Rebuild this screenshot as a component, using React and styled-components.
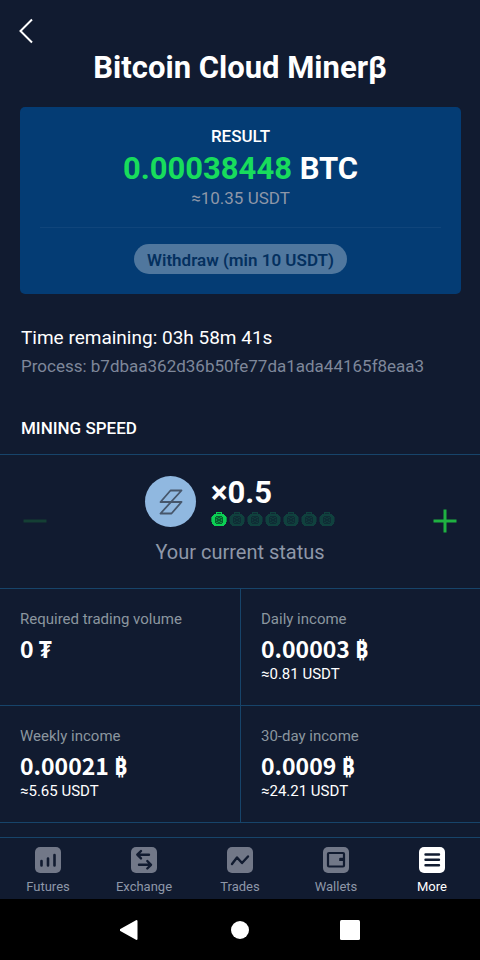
import React from "react";
import styled, { createGlobalStyle } from "styled-components";

const colors = {
  page: "#111b30",
  card: "#043c74",
  line: "#17446a",
  text: "#ffffff",
  muted: "#8e97a8",
  label: "#8b969f",
  green: "#18dc5c",
};

const GlobalStyle = createGlobalStyle`
  *, *::before, *::after { box-sizing: border-box; }
  body {
    margin: 0;
    background: ${colors.page};
    color: ${colors.text};
    font-family: Roboto, "Liberation Sans", sans-serif;
  }
  h1, h2, p, dl, dt, dd { margin: 0; }
  button { font: inherit; border: 0; padding: 0; background: none; color: inherit; cursor: pointer; }
  svg { display: block; flex: none; }
`;

const Screen = styled.div`
  min-height: 100vh;
  display: flex;
  flex-direction: column;
`;

const Content = styled.main`
  flex: 1;
  display: flex;
  flex-direction: column;
`;

const Header = styled.header`
  padding: 16px 16px 0;
`;

const BackButton = styled.button`
  display: block;
  height: 30px;
`;

const Title = styled.h1`
  font-size: 31px;
  line-height: 44px;
  font-weight: 700;
  text-align: center;
`;

const ResultCard = styled.section`
  margin: 17px 19px 0 20px;
  padding: 20px;
  border-radius: 5px;
  background: ${colors.card};
  text-align: center;
`;

const ResultHeading = styled.h2`
  font-size: 17px;
  line-height: 18px;
  font-weight: 500;
`;

const Amount = styled.p`
  && { margin-top: 3px; }
  font-size: 31px;
  line-height: 42px;
  font-weight: 700;

  span { color: ${colors.green}; }
`;

const Equivalent = styled.p`
  font-size: 17px;
  line-height: 16px;
  color: ${colors.muted};
`;

const WithdrawRow = styled.div`
  margin-top: 21px;
  padding-top: 16px;
  border-top: 1px solid #10457b;
`;

const WithdrawButton = styled.button`
  height: 30px;
  padding: 2px 13px 0;
  border-radius: 15px;
  background: #50779e;
  color: #04305f;
  font-size: 17px;
  line-height: 28px;
  font-weight: 600;
  vertical-align: top;
`;

const ProcessInfo = styled.section`
  padding: 30px 21px 0;
`;

const Remaining = styled.p`
  font-size: 19px;
  line-height: 28px;
`;

const ProcessId = styled.p`
  font-size: 17px;
  line-height: 28px;
  color: #7e879a;
  overflow-wrap: anywhere;
`;

const SectionHeading = styled.h2`
  padding: 38px 21px 16px;
  font-size: 17px;
  line-height: 20px;
  font-weight: 500;
`;

const SpeedPanel = styled.section`
  display: flex;
  justify-content: space-between;
  align-items: flex-start;
  padding: 21px 22px 19px;
  border-top: 1px solid ${colors.line};
`;

const StepButton = styled.button`
  display: flex;
  align-items: center;
  justify-content: center;
  width: 26px;
  height: 90px;

  &:disabled { opacity: 0.24; cursor: default; }
`;

const Status = styled.div`
  display: flex;
  flex-direction: column;
  align-items: center;
  gap: 8px;
`;

const SpeedRow = styled.div`
  display: flex;
  align-items: center;
  gap: 15px;
`;

const Badge = styled.div`
  display: grid;
  place-items: center;
  width: 51px;
  height: 51px;
  border-radius: 50%;
  background: #90b8e0;
`;

const Multiplier = styled.p`
  font-size: 31px;
  line-height: 32px;
  font-weight: 700;
`;

const Miners = styled.div`
  display: flex;
  gap: 2px;
  margin-top: 3px;
`;

const StatusText = styled.p`
  font-size: 20px;
  line-height: 34px;
  color: ${colors.muted};
`;

const StatsGrid = styled.dl`
  display: grid;
  grid-template-columns: 1fr 1fr;
  border-top: 1px solid ${colors.line};
`;

const Stat = styled.div`
  min-height: 117px;
  padding: 20px 20px 19px;
  border-bottom: 1px solid ${colors.line};

  &:nth-child(even) { border-left: 1px solid ${colors.line}; }
`;

const StatLabel = styled.dt`
  font-size: 15px;
  line-height: 20px;
  color: ${colors.label};
`;

const StatValue = styled.dd`
  && { margin-top: 3px; }
  font-family: "Noto Sans CJK SC", "Noto Sans", sans-serif;
  font-size: 23px;
  line-height: 33px;
  font-weight: 700;
`;

const StatNote = styled.dd`
  font-size: 15px;
  line-height: 18px;
`;

const Footer = styled.footer`
  position: sticky;
  bottom: 0;
`;

const TabBar = styled.nav`
  display: grid;
  grid-template-columns: repeat(5, 1fr);
  border-top: 1px solid ${colors.line};
  background: ${colors.page};
`;

const Tab = styled.a`
  display: flex;
  flex-direction: column;
  align-items: center;
  gap: 5px;
  padding: 9px 0 3px;
  font-size: 13px;
  line-height: 18px;
  text-decoration: none;
  color: ${({ $active }) => ($active ? colors.text : "#8e97a8")};

  svg { color: ${({ $active }) => ($active ? colors.text : "#727888")}; }
`;

const SystemBar = styled.div`
  display: flex;
  justify-content: center;
  gap: 70px;
  height: 61px;
  background: #000000;
`;

const SystemButton = styled.button`
  display: grid;
  place-items: center;
  width: 40px;
  color: #ffffff;
`;

const tabGlyphs = {
  futures: <path d="M6.500 14v4.500M13 11.500v7M19.500 8v10.500" strokeWidth="2.600" />,
  exchange: (
    <path d="M18 7.700H7M10 4 6.300 7.700 10 11.400M8 17.800h11M16.300 14l3.700 3.800-3.700 3.700" strokeWidth="2.400" />
  ),
  trades: <path d="M5 17l5-6.500 5 5.500L21 9.500" strokeWidth="2.400" />,
  wallets: (
    <>
      <rect x="5" y="6" width="16" height="13.500" rx="1" strokeWidth="2.200" />
      <path d="M21 10.800h-3.800a1 1 0 0 0-1 1v2.200h4.800z" fill={colors.page} stroke="none" />
    </>
  ),
  more: <path d="M6.500 7.500h13.500M6.500 12.800h13.500M6.500 18.200h13.500" strokeWidth="2.400" />,
};

function TabIcon({ name }) {
  return (
    <svg width="26" height="26" viewBox="0 0 26 26" fill="none" aria-hidden="true">
      <rect width="26" height="26" rx="5" fill="currentColor" />
      <g stroke={colors.page} strokeLinecap="round" strokeLinejoin="round">
        {tabGlyphs[name]}
      </g>
    </svg>
  );
}

function MinerIcon({ active }) {
  const shell = active ? "#0ccf54" : "#10413e";
  const handle = active ? "#0a9443" : "#102f38";
  const hole = active ? "#07602f" : "#0f2c35";
  const ring = active ? "#0a9a42" : "#103b3b";
  return (
    <svg width="16" height="14" viewBox="0 0 16 14" aria-hidden="true">
      <path d="M0 5h1v5H0zM15 5h1v5h-1z" fill={handle} />
      <path d="M5 0h6v2h2v1h1v1h1v8h-1v1h-1v1H3v-1H2v-1H1V4h1V3h1V2h2z" fill={shell} />
      <path d="M6 1h4v1H6z" fill={hole} />
      <path d="M5 4h6v1h1v6h-1v1H5v-1H4V5h1z" fill={hole} />
      <path d="M5 5h2v1H5zM9 5h2v1H9zM5 10h2v1H5zM9 10h2v1H9zM5 7h1v2H5zM10 7h1v2h-1zM7 6h2v1H7zM7 9h2v1H7z" fill={ring} />
    </svg>
  );
}

const stats = [
  { label: "Required trading volume", value: "0 ₮" },
  { label: "Daily income", value: "0.00003 ₿", note: "≈0.81 USDT" },
  { label: "Weekly income", value: "0.00021 ₿", note: "≈5.65 USDT" },
  { label: "30-day income", value: "0.0009 ₿", note: "≈24.21 USDT" },
];

const tabs = [
  { id: "futures", label: "Futures" },
  { id: "exchange", label: "Exchange" },
  { id: "trades", label: "Trades" },
  { id: "wallets", label: "Wallets" },
  { id: "more", label: "More" },
];

const minerCount = 7;
const activeMiners = 1;

export default function App() {
  return (
    <Screen>
      <GlobalStyle />
      <Content>
        <Header>
          <BackButton type="button" aria-label="Back">
            <svg width="20" height="30" viewBox="0 0 20 30" fill="none" stroke="#fff" strokeWidth="2">
              <path d="M16 3.500 4.500 15 16 26.500" />
            </svg>
          </BackButton>
          <Title>Bitcoin Cloud Minerβ</Title>
        </Header>

        <ResultCard>
          <ResultHeading>RESULT</ResultHeading>
          <Amount>
            <span>0.00038448</span> BTC
          </Amount>
          <Equivalent>≈10.35 USDT</Equivalent>
          <WithdrawRow>
            <WithdrawButton type="button">Withdraw (min 10 USDT)</WithdrawButton>
          </WithdrawRow>
        </ResultCard>

        <ProcessInfo>
          <Remaining>Time remaining: 03h 58m 41s</Remaining>
          <ProcessId>Process: b7dbaa362d36b50fe77da1ada44165f8eaa3</ProcessId>
        </ProcessInfo>

        <SectionHeading>MINING SPEED</SectionHeading>
        <SpeedPanel>
          <StepButton type="button" aria-label="Decrease speed" disabled>
            <svg width="24" height="24" viewBox="0 0 24 24" stroke="#1fb141" strokeWidth="3">
              <path d="M0.500 12h23" />
            </svg>
          </StepButton>
          <Status>
            <SpeedRow>
              <Badge>
                <svg width="24" height="26" viewBox="0 0 24 26" fill="none" stroke="#46566b" strokeWidth="1.800" strokeLinejoin="round">
                  <path d="M11.500 1.500h11L1.500 24.500h11l10-11.500h-21z" />
                </svg>
              </Badge>
              <div>
                <Multiplier>×0.5</Multiplier>
                <Miners>
                  {Array.from({ length: minerCount }, (_, i) => (
                    <MinerIcon key={i} active={i < activeMiners} />
                  ))}
                </Miners>
              </div>
            </SpeedRow>
            <StatusText>Your current status</StatusText>
          </Status>
          <StepButton type="button" aria-label="Increase speed">
            <svg width="24" height="24" viewBox="0 0 24 24" stroke="#1fb141" strokeWidth="3">
              <path d="M0.500 12h23M12 0.500v23" />
            </svg>
          </StepButton>
        </SpeedPanel>

        <StatsGrid>
          {stats.map((stat) => (
            <Stat key={stat.label}>
              <StatLabel>{stat.label}</StatLabel>
              <StatValue>{stat.value}</StatValue>
              {stat.note && <StatNote>{stat.note}</StatNote>}
            </Stat>
          ))}
        </StatsGrid>
      </Content>

      <Footer>
        <TabBar aria-label="Main">
          {tabs.map((tab) => {
            const active = tab.id === "more";
            return (
              <Tab key={tab.id} href={`#${tab.id}`} $active={active} aria-current={active ? "page" : undefined}>
                <TabIcon name={tab.id} />
                {tab.label}
              </Tab>
            );
          })}
        </TabBar>
        <SystemBar>
          <SystemButton type="button" aria-label="System back">
            <svg width="20" height="22" viewBox="0 0 20 22" fill="currentColor">
              <path d="M16 1.200a1 1 0 0 1 1.500.900v17.800a1 1 0 0 1-1.500.900L0.300 11.900a1 1 0 0 1 0-1.800z" />
            </svg>
          </SystemButton>
          <SystemButton type="button" aria-label="Home">
            <svg width="20" height="20" viewBox="0 0 20 20" fill="currentColor">
              <circle cx="10" cy="10" r="9" />
            </svg>
          </SystemButton>
          <SystemButton type="button" aria-label="Recent apps">
            <svg width="20" height="20" viewBox="0 0 20 20" fill="currentColor">
              <rect width="20" height="20" rx="1.500" />
            </svg>
          </SystemButton>
        </SystemBar>
      </Footer>
    </Screen>
  );
}
